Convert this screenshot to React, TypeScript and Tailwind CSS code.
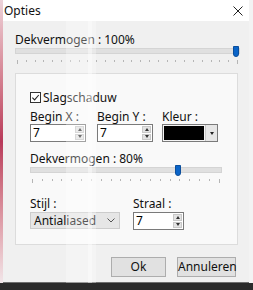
function Ticks({ count, className }: { count: number; className: string }) {
  return (
    <div className={`flex justify-between ${className}`}>
      {Array.from({ length: count }).map((_, i) => (
        <span
          key={i}
          className={`w-px bg-[#b5b5b5] ${i === 0 || i === count - 1 ? "h-[4px]" : "h-[2px]"}`}
        />
      ))}
    </div>
  );
}

function Slider({ pos, ticks, className }: { pos: number; ticks: number; className: string }) {
  return (
    <div className={className}>
      <div className="relative h-[11px]">
        <div className="absolute left-0 right-0 top-[2px] h-[6px] bg-[#e0e0e0] border border-[#d4d4d4]" />
        <div
          className="absolute top-0 h-[11px] w-[6px] bg-[#0a64c8] rounded-b-[3px] border border-[#0b4e9c]"
          style={{ left: pos }}
        />
      </div>
      <Ticks count={ticks} className="mt-[3px] px-[2px]" />
    </div>
  );
}

function Spin({ value, w }: { value: string; w: string }) {
  return (
    <div className={`flex h-[18px] ${w} border border-[#7a7a7a] bg-white`}>
      <div className="flex-1 pl-[2px] text-[12px] leading-[16px] text-black">{value}</div>
      <div className="flex w-[11px] flex-col gap-px p-px">
        <div className="flex flex-1 items-center justify-center bg-[#e3e3e3] border border-[#c8c8c8]">
          <span className="border-x-[2.5px] border-b-[3px] border-x-transparent border-b-[#333]" />
        </div>
        <div className="flex flex-1 items-center justify-center bg-[#e3e3e3] border border-[#c8c8c8]">
          <span className="border-x-[2.5px] border-t-[3px] border-x-transparent border-t-[#333]" />
        </div>
      </div>
    </div>
  );
}

export default function App() {
  return (
    <div className="relative h-[290px] w-[253px] overflow-hidden bg-[#2b2b2b] font-['Noto_Sans','Open_Sans',sans-serif] text-[12px] text-[#111]">
      <div className="absolute left-0 top-0 h-[283px] w-[3px] bg-gradient-to-b from-[#ecd3da] via-[#b8395a] to-[#f1e6e9]" />
      <div className="absolute right-0 top-0 h-[283px] w-[4px] bg-[#f3f3f3]" />
      <div className="ml-[2px] flex h-[283px] w-[248px] flex-col border-r border-b border-[#6f6f6f] bg-[#f0f0f0]">
        <div className="flex h-[21px] items-center justify-between bg-white pl-[2px] pr-[6px]">
          <span className="text-[12px] leading-none">Opties</span>
          <svg viewBox="0 0 10 10" className="h-[10px] w-[10px]">
            <path d="M0.5 0.5 L9.5 9.5 M9.5 0.5 L0.5 9.5" stroke="#222" strokeWidth="1" fill="none" />
          </svg>
        </div>
        <div className="flex flex-1 flex-col px-[13px] pt-[12px]">
          <div className="leading-[13px]">Dekvermogen : 100%</div>
          <Slider pos={218} ticks={26} className="w-[225px]" />
          <div className="mt-[9px] h-[172px] w-[223px] border border-[#dcdcdc] bg-[#f9f9f9] px-[14px] pt-[17px]">
            <label className="flex items-center gap-[2px]">
              <span className="flex h-[11px] w-[11px] items-center justify-center border border-[#333] bg-white">
                <svg viewBox="0 0 10 10" className="h-[9px] w-[9px]">
                  <path d="M1.5 5.2 L4 7.6 L8.6 2.2" fill="none" stroke="#222" strokeWidth="1.2" />
                </svg>
              </span>
              <span className="leading-[13px]">Slagschaduw</span>
            </label>
            <div className="mt-[6px] flex">
              <div className="flex flex-col gap-px">
                <span className="leading-[13px]">Begin X :</span>
                <Spin value="7" w="w-[56px]" />
              </div>
              <div className="ml-[11px] flex flex-col gap-px">
                <span className="leading-[13px]">Begin Y :</span>
                <Spin value="7" w="w-[56px]" />
              </div>
              <div className="ml-[9px] flex flex-col gap-px">
                <span className="leading-[13px]">Kleur :</span>
                <div className="flex h-[18px] w-[56px] border border-[#7a7a7a] bg-[#f4f4f4]">
                  <div className="m-px flex-1 bg-black" />
                  <div className="flex w-[12px] items-center justify-center border-l border-[#c8c8c8] bg-[#e6e6e6]">
                    <span className="border-x-[2.5px] border-t-[3px] border-x-transparent border-t-[#222]" />
                  </div>
                </div>
              </div>
            </div>
            <div className="mt-[10px] leading-[13px]">Dekvermogen : 80%</div>
            <Slider pos={145} ticks={20} className="w-[192px]" />
            <div className="mt-[14px] flex gap-[13px]">
              <div className="flex flex-col gap-[2px]">
                <span className="leading-[13px]">Stijl :</span>
                <div className="flex h-[17px] w-[90px] items-center justify-between border border-[#cccccc] bg-[#e6e6e6] pl-[3px] pr-[4px]">
                  <span className="leading-none">Antialiased</span>
                  <svg viewBox="0 0 8 5" className="h-[5px] w-[8px]">
                    <path d="M0.5 0.5 L4 4 L7.5 0.5" fill="none" stroke="#555" strokeWidth="1" />
                  </svg>
                </div>
              </div>
              <div className="flex flex-col gap-[2px]">
                <span className="leading-[13px]">Straal :</span>
                <Spin value="7" w="w-[51px]" />
              </div>
            </div>
          </div>
          <div className="ml-[96px] mt-[12px] flex gap-[11px]">
            <button className="h-[20px] w-[58px] border border-[#adadad] bg-[#e1e1e1] leading-none">Ok</button>
            <button className="h-[20px] w-[59px] border border-[#adadad] bg-[#e1e1e1] leading-none">Annuleren</button>
          </div>
        </div>
      </div>
      <div className="pointer-events-none absolute left-[66px] top-0 h-[283px] w-[30px] bg-white/30" />
      <div className="pointer-events-none absolute left-[88px] top-0 h-[283px] w-[4px] bg-white/40" />
    </div>
  );
}
